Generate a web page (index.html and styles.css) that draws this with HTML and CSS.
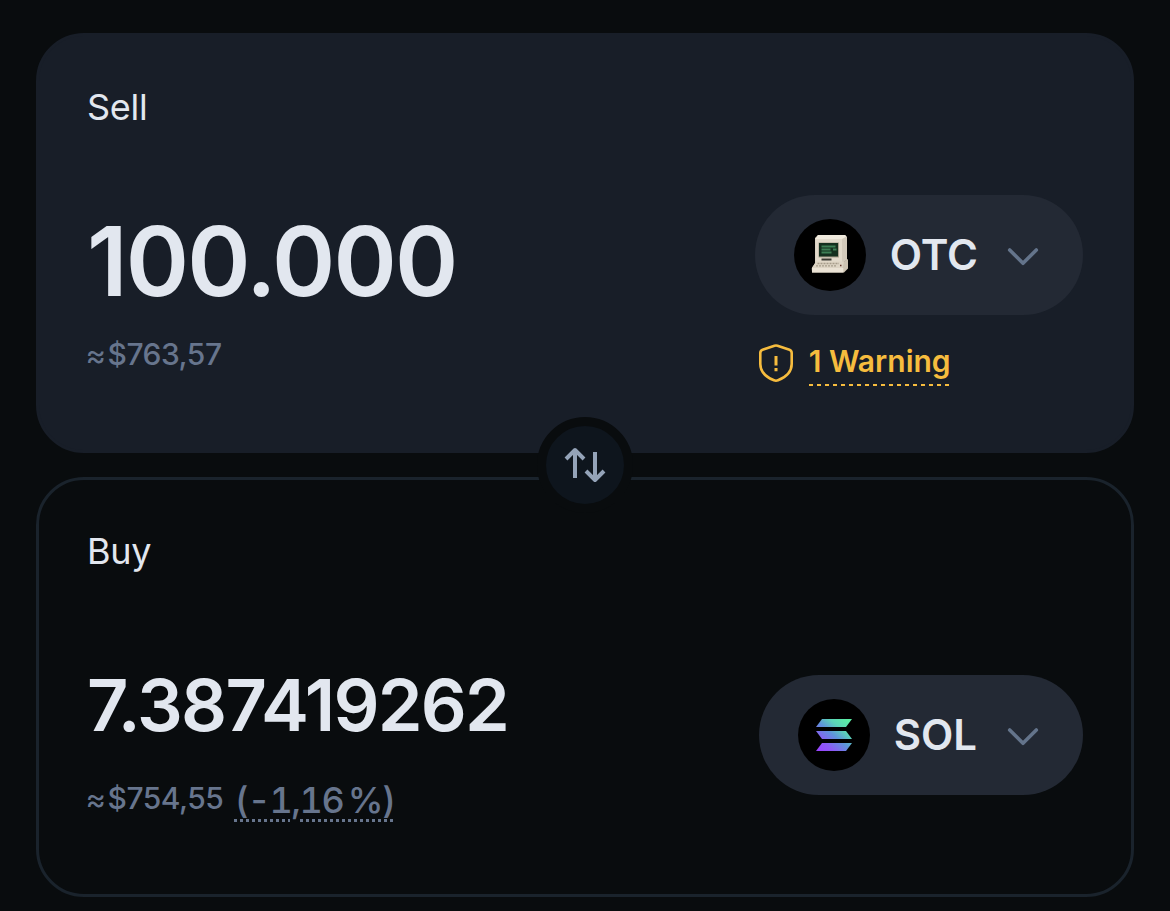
FILE: index.html
```html
<!DOCTYPE html>
<html lang="en">
<head>
<meta charset="utf-8">
<title>Swap</title>
<link rel="stylesheet" href="styles.css">
</head>
<body>
<main class="swap">
  <section class="card card-sell">
    <h2 class="label">Sell</h2>
    <div class="row">
      <div class="value">
        <div class="amount amount-lg">100.000</div>
        <div class="fiat"><span class="approx">≈</span><span class="usd">$763,57</span></div>
      </div>
      <div class="side">
        <button class="token">
          <svg class="coin" viewBox="0 0 72 72">
            <circle cx="36" cy="36" r="36" fill="#000"/>
            <path d="M24 16h27l2 2v23l-5 3H21V19z" fill="#d3cabb"/>
            <path d="M21.500 19H48v24H21.500z" fill="#e2dacb"/>
            <path d="M24 16h27l1.500 1.500L48 20H21.500z" fill="#f0eadd"/>
            <path d="M24.500 23.500h20.500v15H24.500z" fill="#aaa18e"/>
            <path d="M25 24h19v13.500H25z" fill="#14301f"/>
            <path d="M27.500 27.500h14M27.500 30.500h9M27.500 33.500h10M39 30.500h3.500" stroke="#3d7f55" stroke-width="1.900"/>
            <path d="M27.500 40.500h10" stroke="#3d3b33" stroke-width="2"/>
            <path d="M22 43h27l5-3v9.500l-4 4H18v-5z" fill="#cdc3b2"/>
            <path d="M22 42.500h28l-1.500 6.500H18z" fill="#ddd4c4"/>
            <path d="M17.800 49h31.500v4.500H18z" fill="#ebe3d5"/>
            <path d="M23.500 44.500h21.500M22 46.800h21" stroke="#a79d8b" stroke-width="1.300" stroke-dasharray="2 1"/>
            <path d="M46 46.500h1.500" stroke="#64342a" stroke-width="1.500"/>
          </svg>
          <span class="symbol">OTC</span>
          <svg class="chevron" viewBox="0 0 32 20"><path d="M2.700 3L16 16.300 29.300 3"/></svg>
        </button>
        <div class="warning">
          <svg class="shield" viewBox="0 0 36 40"><path d="M16.500 2.700Q18 2.200 19.500 2.700L31.500 6.800Q33.700 7.600 33.700 10V21C33.700 29.500 27 34.500 20 37.300Q18 38.100 16 37.300C9 34.500 2.300 29.500 2.300 21V10Q2.300 7.600 4.500 6.800Z"/><path class="mark" d="M18 13v9.500M18 25v3.200"/></svg>
          <span class="warning-text">1 Warning</span>
        </div>
      </div>
    </div>
  </section>
  <section class="card card-buy">
    <h2 class="label">Buy</h2>
    <div class="row">
      <div class="value">
        <div class="amount amount-md">7.387419262</div>
        <div class="fiat"><span class="approx">≈</span><span class="usd">$754,55</span><span class="change">(-1,16&nbsp;%)</span></div>
      </div>
      <div class="side">
        <button class="token">
          <svg class="coin" viewBox="0 0 72 72">
            <defs><linearGradient id="sol" gradientUnits="userSpaceOnUse" x1="21" y1="52" x2="49" y2="19"><stop offset="0" stop-color="#9945ff"/><stop offset=".22" stop-color="#8c5af5"/><stop offset=".5" stop-color="#5e94dc"/><stop offset=".72" stop-color="#5bd3b8"/><stop offset="1" stop-color="#5bf0a4"/></linearGradient></defs>
            <circle cx="36" cy="36" r="36" fill="#000"/>
            <path d="M24 20h30l-6 8H18zM18 32h30l6 8H24zM24 44h30l-6 8H18z" fill="url(#sol)"/>
          </svg>
          <span class="symbol">SOL</span>
          <svg class="chevron" viewBox="0 0 32 20"><path d="M2.700 3L16 16.300 29.300 3"/></svg>
        </button>
      </div>
    </div>
  </section>
  <button class="flip" aria-label="Switch tokens">
    <svg class="arrows" viewBox="0 0 42 36"><path d="M11 31V3M2 12l9-9 9 9M31 5v28M22 24l9 9 9-9"/></svg>
  </button>
</main>
</body>
</html>
```
FILE: styles.css
```css
* { box-sizing: border-box; }
body {
  margin: 0;
  background: #090c0e;
  color: #e2e7ef;
  font-family: Inter, sans-serif;
}
button { border: 0; font: inherit; color: inherit; }
.swap {
  position: relative;
  display: flex;
  flex-direction: column;
  gap: 24px;
  padding: 33px 36px 14px;
}
.card {
  height: 420px;
  padding: 47px 48px;
  border: 3px solid #1a232c;
  border-radius: 48px;
}
.card-sell { background: #181e28; border-color: #181e28; }
.label { margin: 0; font-size: 36px; font-weight: 400; line-height: 48px; letter-spacing: -.3px; }
.row { display: flex; justify-content: space-between; }
.value { display: flex; flex-direction: column; }
.amount { font-weight: 600; white-space: nowrap; }
.amount-lg { margin-top: 70px; font-size: 96px; line-height: 120px; letter-spacing: -1.85px; }
.amount-md { margin-top: 82px; font-size: 72px; line-height: 96px; letter-spacing: -1.8px; }
.fiat { display: flex; align-items: flex-start; color: #67758d; font-size: 30px; font-weight: 500; line-height: 36px; white-space: nowrap; }
.amount-lg + .fiat { margin-top: 15px; }
.amount-md + .fiat { margin-top: 27px; }
.usd { letter-spacing: -.5px; }
.approx { width: 22px; margin: 1px 0 0 -1.5px; font-size: 31px; font-weight: 400; }
.change { margin: 2px 0 0 11.5px; font-size: 36px; font-variant-numeric: tabular-nums; letter-spacing: -1.4px; word-spacing: -4px; text-decoration: underline dotted 3px; text-underline-offset: 6px; }
.side { display: flex; flex-direction: column; align-items: flex-start; }
.card-sell .side { margin-top: 64px; }
.card-buy .side { margin-top: 100px; }
.token {
  display: flex;
  align-items: center;
  height: 120px;
  padding: 0 44px 0 39px;
  border-radius: 60px;
  background: #232934;
}
.coin { width: 72px; height: 72px; }
.symbol { margin: 0 29px 0 24px; font-size: 42px; font-weight: 600; line-height: 48px; }
.card-buy .symbol { margin-right: 30px; }
.chevron { width: 32px; height: 20px; margin-top: 3px; fill: none; stroke: #64748b; stroke-width: 3.6; stroke-linecap: round; stroke-linejoin: round; }
.warning { display: flex; align-items: center; margin: 25px 0 0 3px; color: #f6bc3e; }
.shield { width: 36px; height: 40px; margin-right: 15px; fill: none; stroke: currentColor; stroke-width: 2.6; stroke-linecap: round; stroke-linejoin: round; }
.mark { stroke-width: 3; stroke-linecap: butt; }
.warning-text {
  padding-bottom: 4px;
  font-size: 30px;
  font-weight: 600;
  line-height: 42px;
  background: repeating-linear-gradient(90deg, currentColor 0 4px, transparent 4px 8px) 0 100% / 100% 2px no-repeat;
}
.flip {
  position: absolute;
  left: 537px;
  top: 417px;
  display: grid;
  place-items: center;
  width: 96px;
  height: 96px;
  padding: 0;
  border: 9px solid #090c0e;
  border-radius: 50%;
  background: #0e151d;
}
.arrows { width: 42px; height: 36px; fill: none; stroke: #94a3b8; stroke-width: 4; stroke-linejoin: round; }
```
